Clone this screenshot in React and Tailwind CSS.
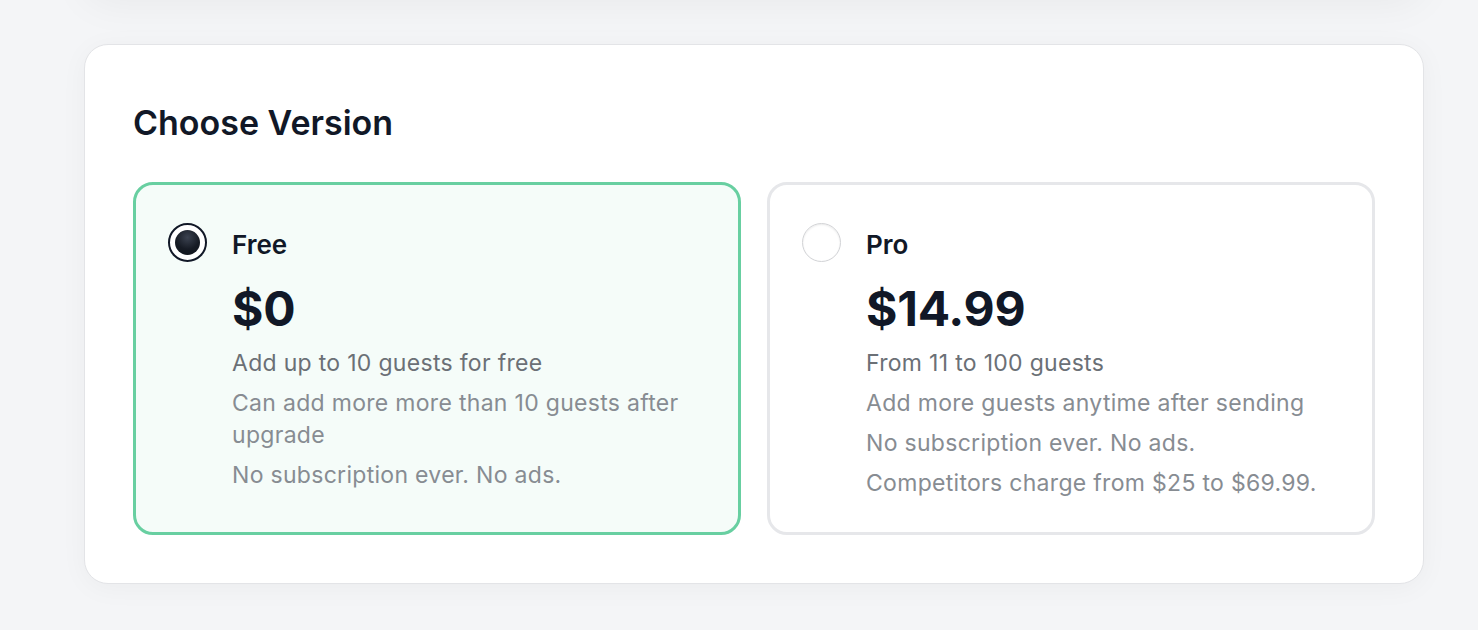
import React, { useState } from 'react';

const plans = [
  {
    id: 'free',
    name: 'Free',
    price: '$0',
    lead: 'Add up to 10 guests for free',
    notes: ['Can add more more than 10 guests after upgrade', 'No subscription ever. No ads.'],
  },
  {
    id: 'pro',
    name: 'Pro',
    price: '$14.99',
    lead: 'From 11 to 100 guests',
    notes: [
      'Add more guests anytime after sending',
      'No subscription ever. No ads.',
      'Competitors charge from $25 to $69.99.',
    ],
  },
];

const Radio = ({ checked }) =>
  checked ? (
    <span className="flex h-[39px] w-[39px] shrink-0 items-center justify-center rounded-full border-2 border-[#111827] bg-white">
      <span className="h-[25px] w-[25px] rounded-full bg-[radial-gradient(circle_at_50%_30%,#3b4250_0%,#161b24_55%,#0f141c_100%)]" />
    </span>
  ) : (
    <span className="h-[39px] w-[39px] shrink-0 rounded-full border-[1.5px] border-[#d2d3d6] bg-white shadow-[inset_0_1px_2px_rgba(0,0,0,0.08)]" />
  );

const PlanCard = ({ plan, selected, onSelect }) => (
  <button
    type="button"
    onClick={() => onSelect(plan.id)}
    className={
      selected
        ? 'flex items-start gap-[25px] rounded-[20px] border-[3px] border-[#68cfa1] bg-[#f5fcf9] pt-[38px] pb-[33px] pl-[32px] pr-[32px] text-left'
        : 'flex items-start gap-[25px] rounded-[20px] border-[3px] border-[#e6e7ea] bg-white pt-[38px] pb-[33px] pl-[32px] pr-[32px] text-left'
    }
  >
    <Radio checked={selected} />
    <div className="flex flex-col">
      <div className="text-[26px] leading-[44px] font-semibold text-[#111827]">{plan.name}</div>
      <div className="mt-[10px] text-[48px] leading-[64px] font-bold tracking-[-0.2px] text-[#111827]">{plan.price}</div>
      <div className="mt-[6px] flex flex-col gap-[8px] text-[23px] leading-[32px] tracking-[0.3px]">
        <p className="text-[#6b7076]">{plan.lead}</p>
        {plan.notes.map((n) => (
          <p key={n} className="text-[#878c92]">
            {n}
          </p>
        ))}
      </div>
    </div>
  </button>
);

export default function App() {
  const [selected, setSelected] = useState('free');

  return (
    <div className="h-[630px] overflow-hidden bg-[#f4f5f7] font-['Inter','Liberation_Sans',sans-serif]">
      {/* bottom of the card above, scrolled out of view */}
      <div className="ml-[84px] -mt-[300px] h-[296px] w-[1340px] rounded-3xl bg-white shadow-[0_8px_40px_rgba(0,0,0,0.05)]" />
      <section className="ml-[84px] mt-[48px] w-[1340px] rounded-[24px] border border-[#e3e4e7] bg-white px-[48px] pt-[52px] pb-[48px] shadow-[0_4px_28px_rgba(0,0,0,0.04)]">
        <h2 className="text-[34px] leading-[52px] font-semibold text-[#111827]">Choose Version</h2>
        <div className="mt-[33px] grid grid-cols-2 gap-[26px]">
          {plans.map((p) => (
            <PlanCard key={p.id} plan={p} selected={selected === p.id} onSelect={setSelected} />
          ))}
        </div>
      </section>
    </div>
  );
}
